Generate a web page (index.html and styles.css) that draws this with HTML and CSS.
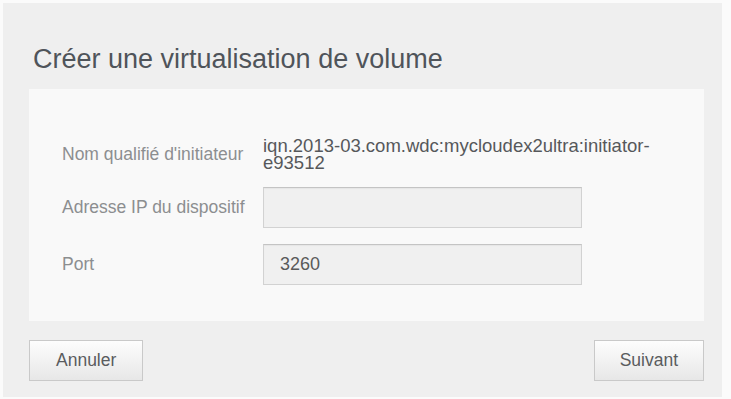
FILE: index.html
```html
<!DOCTYPE html>
<html lang="fr">
<head>
    <meta charset="UTF-8">
    <meta name="viewport" content="width=device-width, initial-scale=1.0">
    <title>Créer une virtualisation de volume</title>
    <link rel="stylesheet" href="styles.css">
</head>
<body>

<div class="dialog">
    <h1>Créer une virtualisation de volume</h1>

    <div class="content">
        <!-- Informations de la cible iSCSI -->
        <div class="row">
            <label>Nom qualifié d'initiateur</label>
            <div class="value">iqn.2013-03.com.wdc:mycloudex2ultra:initiator-e93512</div>
        </div>
        <div class="row">
            <label for="ip">Adresse IP du dispositif</label>
            <input type="text" id="ip">
        </div>
        <div class="row">
            <label for="port">Port</label>
            <input type="text" id="port" value="3260">
        </div>
    </div>

    <div class="buttons">
        <button>Annuler</button>
        <button>Suivant</button>
    </div>
</div>

</body>
</html>
```
FILE: styles.css
```css
body {
    font-family: 'Liberation Sans', Arial, sans-serif;
    background-color: #fbfbfb;
    margin: 0;
    padding: 3px 0 0 3px;
}

.dialog {
    width: 719px;
    height: 394px;
    box-sizing: border-box;
    background-color: #efefef;
    padding: 41px 18px 0 26px;
}

h1 {
    margin: 0 0 14px 4px;
    font-size: 27px;
    line-height: 31px;
    font-weight: normal;
    color: #4f545a;
}

.content {
    background-color: #f9f9f9;
    padding: 48px 0 36px 33px;
}

.row {
    display: grid;
    grid-template-columns: 201px 319px;
    align-items: center;
    margin-bottom: 16px;
}

.row:last-child {
    margin-bottom: 0;
}

label {
    font-size: 17.5px;
    color: #8c8e90;
}

.value {
    width: 405px;
    font-size: 18.5px;
    line-height: 17px;
    color: #56585b;
}

input[type="text"] {
    height: 41px;
    box-sizing: border-box;
    padding: 0 16px;
    background-color: #f0f0f0;
    border: 1px solid #d2d2d2;
    border-top-color: #c4c4c4;
    box-shadow: inset 0 1px 1px rgba(0, 0, 0, 0.04);
    font-family: inherit;
    font-size: 18px;
    color: #5a5a5a;
    outline: none;
}

.buttons {
    display: flex;
    justify-content: space-between;
    margin-top: 19px;
}

button {
    height: 41px;
    padding: 0 26px;
    background: linear-gradient(#fdfdfd, #e7e7e7);
    border: 1px solid #c9c9c9;
    font-family: inherit;
    font-size: 17.5px;
    color: #5a5c5e;
    cursor: pointer;
}

.buttons button:last-child {
    padding: 0 25px;
}
```
